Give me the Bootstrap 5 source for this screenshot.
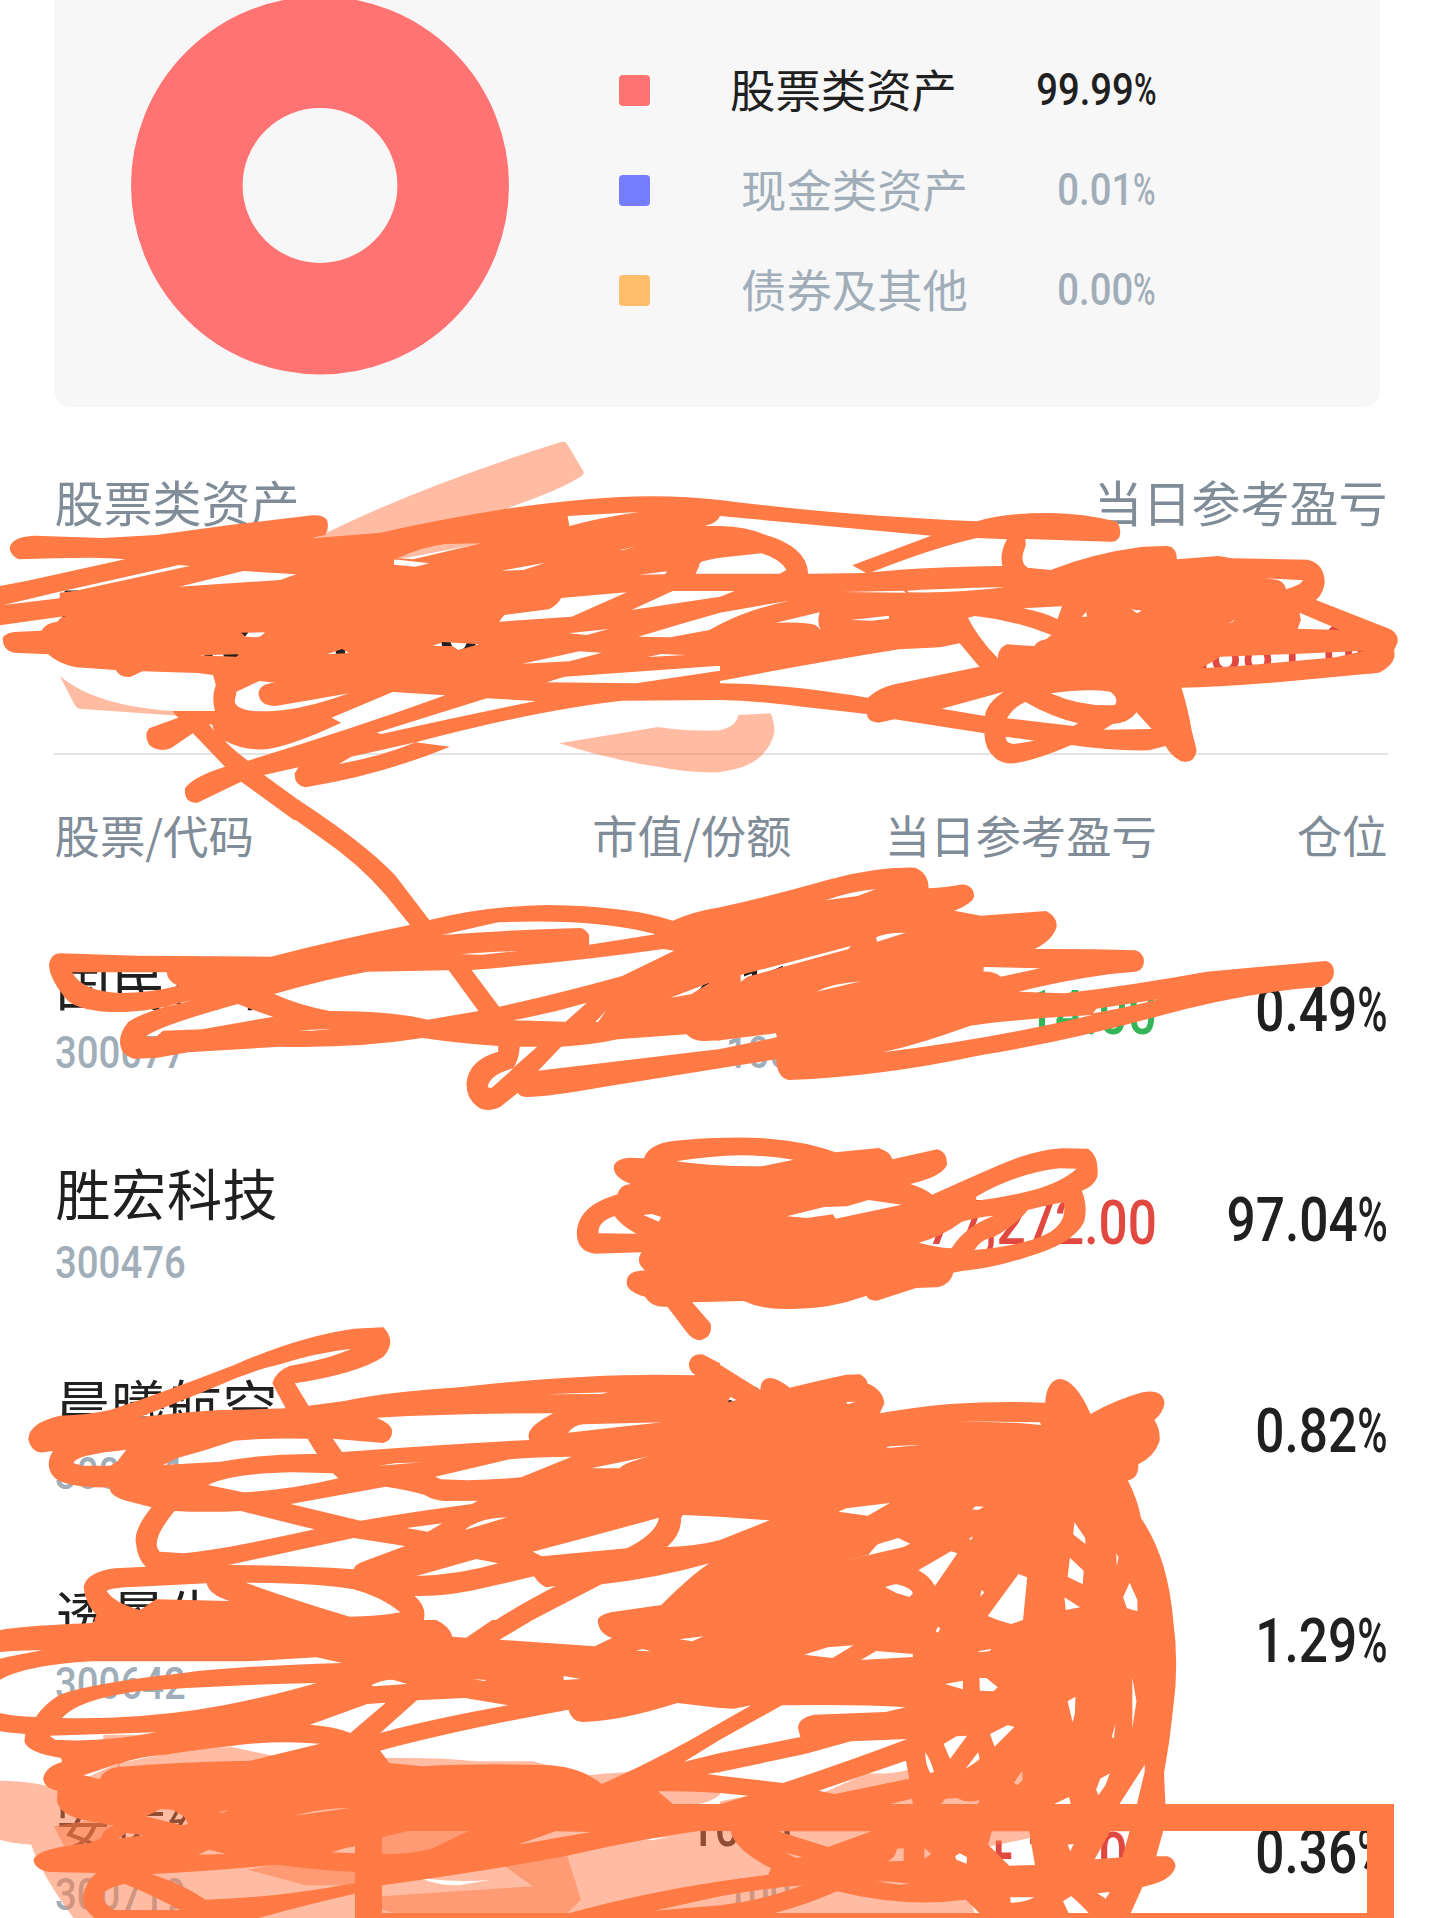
<!DOCTYPE html>
<html lang="zh-CN">
<head>
<meta charset="utf-8">
<meta name="viewport" content="width=device-width, initial-scale=1">
<title>持仓明细</title>
<link href="https://cdn.jsdelivr.net/npm/bootstrap@5.3.0/dist/css/bootstrap.min.css" rel="stylesheet">
<style>
body{font-family:"Noto Sans CJK SC",sans-serif;color:#202020;background:#fff;overflow:hidden}
.screen{width:1440px;height:1918px;overflow:hidden}
.alloc-card{margin-left:54px;width:1326px;height:407px;background:#f7f7f7;border-radius:0 0 16px 16px;overflow:hidden}
.donut{margin-left:76.500px;margin-top:-4px;flex:none}
.legend-list{margin-left:110.500px;width:537px;padding-top:40px}
.legend-line{height:100px;font-size:45.4px;line-height:100px;color:#a1aeb9}
.legend-line.active{color:#202020}
.swatch{width:31px;height:31px;border-radius:4px;flex:none}
.legend-name{margin-left:91px;position:relative;top:-2px}
.active .legend-name{margin-left:80px}
.num{font-family:Roboto,sans-serif;font-weight:500;display:inline-block;transform:scaleX(.85);transform-origin:right;white-space:nowrap}
.num.start{transform-origin:left}
.pct{display:inline-block;transform:scaleX(.8);transform-origin:left;margin-right:-.15em}
.num-md{font-size:45px}
.num-lg{font-size:60.5px;line-height:66px}
.num-mkt{font-size:53px;line-height:66px}
.code{font-size:43.6px;line-height:50px;color:#a1aeb9;transform:scaleX(.88)}
.label-gray{color:#808c98}
.inner{padding-left:54.500px;padding-right:52.500px}
.summary{height:347px;padding-top:66px}
.summary-label{font-size:49px;line-height:56px}
.total{font-size:94px;line-height:98px;letter-spacing:3px}
.total-pl{font-size:67px;line-height:80px;padding-top:33px}
.rule{height:2px;background:#e4e4e4;margin:-1px 52px 0 54px}
.thead-line{margin-top:54px;height:143.5px;font-size:45.4px;line-height:50px}
.stock{height:210.5px}
.c-name{width:447px;flex:none}
.c-mkt{width:290px;flex:none;text-align:right}
.c-pl{width:365.5px;flex:none;text-align:right}
.c-pos{width:230.5px;flex:none;text-align:right}
.stock-name{font-size:55px;line-height:66px;height:66px;position:relative;top:-5px;left:1px;letter-spacing:.7px;white-space:nowrap}
.second{height:50px;margin-top:10px}
.stock .c-pos{padding-top:25px}
.stock .c-pl{padding-top:28px}
.up{color:#e1483f}.down{color:#34b558}
.scribble{position:absolute;left:0;top:0;pointer-events:none}
</style>
</head>
<body>
<main class="screen position-relative">
  <section class="alloc-card d-flex">
    <svg class="donut" width="378" height="379" viewBox="0 0 378 379"><circle cx="189" cy="189.5" r="133.2" fill="none" stroke="#ff7473" stroke-width="111.6"/></svg>
    <div class="legend-list">
      <div class="legend-line active d-flex align-items-center"><span class="swatch" style="background:#ff7473"></span><span class="legend-name">股票类资产</span><span class="num num-md ms-auto">99.99<span class="pct">%</span></span></div>
      <div class="legend-line d-flex align-items-center"><span class="swatch" style="background:#747dff"></span><span class="legend-name">现金类资产</span><span class="num num-md ms-auto">0.01<span class="pct">%</span></span></div>
      <div class="legend-line d-flex align-items-center"><span class="swatch" style="background:#ffbe69"></span><span class="legend-name">债券及其他</span><span class="num num-md ms-auto">0.00<span class="pct">%</span></span></div>
    </div>
  </section>

  <section class="summary inner">
    <div class="summary-label label-gray d-flex justify-content-between"><span>股票类资产</span><span>当日参考盈亏</span></div>
    <div class="d-flex justify-content-between align-items-start pt-5">
      <span class="num start total">568,271.00</span>
      <span class="num total-pl up">76,881.00</span>
    </div>
  </section>
  <div class="rule"></div>

  <section class="inner">
    <div class="thead-line label-gray d-flex">
      <div class="c-name">股票/代码</div><div class="c-mkt">市值/份额</div><div class="c-pl">当日参考盈亏</div><div class="c-pos">仓位</div>
    </div>
    <div class="stock d-flex">
      <div class="c-name"><div class="stock-name">国民技术</div><div class="second"><span class="num start code">300077</span></div></div>
      <div class="c-mkt"><span class="num num-mkt">2111</span><div class="second"><span class="num code">100</span></div></div>
      <div class="c-pl"><span class="num num-lg down">-14.00</span></div>
      <div class="c-pos"><span class="num num-lg">0.49<span class="pct">%</span></span></div>
    </div>
    <div class="stock d-flex">
      <div class="c-name"><div class="stock-name">胜宏科技</div><div class="second"><span class="num start code">300476</span></div></div>
      <div class="c-mkt"></div>
      <div class="c-pl"><span class="num num-lg up">77,272.00</span></div>
      <div class="c-pos"><span class="num num-lg">97.04<span class="pct">%</span></span></div>
    </div>
    <div class="stock d-flex">
      <div class="c-name"><div class="stock-name">晨曦航空</div><div class="second"><span class="num start code">300581</span></div></div>
      <div class="c-mkt"><span class="num num-mkt">3595</span></div>
      <div class="c-pl"></div>
      <div class="c-pos"><span class="num num-lg">0.82<span class="pct">%</span></span></div>
    </div>
    <div class="stock d-flex">
      <div class="c-name"><div class="stock-name">透景生命</div><div class="second"><span class="num start code">300642</span></div></div>
      <div class="c-mkt"></div>
      <div class="c-pl"></div>
      <div class="c-pos"><span class="num num-lg">1.29<span class="pct">%</span></span></div>
    </div>
    <div class="stock d-flex">
      <div class="c-name"><div class="stock-name">安达维尔</div><div class="second"><span class="num start code">300719</span></div></div>
      <div class="c-mkt"><span class="num num-mkt">1045</span><div class="second"><span class="num code">100</span></div></div>
      <div class="c-pl"><span class="num num-lg up">+ 10.00</span></div>
      <div class="c-pos"><span class="num num-lg">0.36<span class="pct">%</span></span></div>
    </div>
  </section>

  <!-- marker strokes laid over the list; each group is one patch of the drawing -->
  <svg class="scribble" width="1440" height="1918" viewBox="0 0 1440 1918" fill="#ff7a45" fill-rule="evenodd">
    <g fill-opacity=".5">
      <g transform="translate(0 420) scale(.459184 .333333)">
        <path d="M680 360Q900 205 1220 67Q1230 63 1234 70L1271 155Q1272 165 1262 172Q1220 210 1110 262L1050 300V370L860 420Z"/>
        <path d="M130 768Q210 860 380 873L388 887L180 867Q168 868 163 855Z"/>
        <path d="M1218 970L1430 922Q1440 920 1460 926Q1510 934 1568 931V1057Q1500 1060 1440 1042Q1330 1020 1218 970Z"/>
      </g>
      <path transform="translate(720 420) scale(.459184 .333333)" d="M0 930Q35 920 40 885L110 880Q120 910 118 940Q100 1040 0 1056Z"/>
      <g transform="translate(0 1598) scale(.459184 .333333)">
        <path d="M225 410H345V428H225ZM0 548Q80 550 130 575L250 500Q400 450 505 447L600 475L850 480Q960 478 1040 490L1160 490L1280 532Q1360 520 1450 519L1568 560V590Q1545 615 1520 618L1568 690V960H160Q90 830 68 740Q20 735 0 725ZM915 840Q1000 855 1070 845L1000 862Q950 862 915 840ZM1400 722L1455 717L1420 727Z"/>
        <path d="M117 685L250 655V720L140 745ZM832 698H1022L940 768H832ZM832 895L1160 865L1100 805L1235 772L1265 905L1235 946H860L832 935ZM540 815L605 798L773 822V862H665Z"/>
      </g>
      <path transform="translate(720 1598) scale(.459184 .333333)" d="M0 610L62 593L215 590L320 526Q370 530 410 515L430 600L480 590L570 475L660 510L675 720L600 742L500 770L560 960H0Z"/>
    </g>

    <path transform="translate(0 420) scale(.459184 .333333)" d="M0 498L60 482L272 418Q230 410 120 415L40 418Q22 405 21 385Q24 350 75 347L225 354L340 345L500 315L680 286Q705 284 712 300Q718 325 708 345L680 355L830 338Q950 300 1110 265Q1300 228 1420 229Q1500 230 1568 240V840L1355 842Q1170 870 905 967L980 980Q830 1065 665 1102Q640 1095 642 1060L650 1042L575 1065L710 1200H640L525 1085L430 1148Q400 1150 403 1105Q420 1070 490 1040L420 940L372 985Q345 998 325 975Q312 945 325 925L388 893L375 873L468 873Q460 830 470 795L464 765L430 759L310 754L285 770Q262 775 252 750L165 742Q125 730 105 703L30 698Q5 690 6 655Q12 635 40 635L90 632Q100 608 125 605Q130 590 148 587L0 616Z
      M1568 288Q1562 310 1535 318H1568ZM1568 413Q1540 420 1530 424Q1522 430 1522 440L1515 461H1568ZM1465 513L1375 570L1568 530V513ZM1568 578Q1480 612 1390 650L1460 652L1545 630L1568 613ZM1568 737L1230 770L1190 787L1385 790L1568 752Z
      M8 555L125 517L390 435L413 438L165 512L130 518V535ZM390 500L530 453L645 463L610 480ZM858 418L935 430L905 440L858 434ZM865 415Q920 380 970 372L1048 370L900 418ZM1236 288L1390 276Q1300 295 1240 318ZM1092 452L1188 428L1140 450ZM1392 464L1453 454L1448 463ZM1350 390L1380 381L1355 391Z
      M1087 605L1098 585L1195 568Q1215 555 1222 534L1365 517L1245 590ZM1238 640L1325 627L1278 645ZM525 638L577 637Q570 652 555 652L535 650ZM430 706L520 703L515 710ZM712 703L745 687L760 699ZM942 678L965 666L1043 673L998 690L985 678ZM1138 731L1262 694L1310 698L1240 724ZM1410 711L1440 702L1493 705Z
      M515 815L565 783L600 788Q565 790 563 820Q565 858 600 858Q680 840 760 820Q680 860 620 870Q520 885 511 845ZM722 893L855 816L970 826Q760 930 540 1022Q500 980 490 962Q530 992 580 988Q640 975 743 908ZM820 938L1060 835L1167 843Q1000 890 830 942ZM738 1032L765 1010L905 967Q830 1010 738 1032ZM455 912L462 914L466 932Z"/>

    <path transform="translate(720 420) scale(.459184 .333333)" d="M0 240Q250 285 560 304Q620 278 720 279Q790 280 865 305Q875 325 870 350Q865 366 850 365L665 357L666 375L660 400Q655 430 670 443L720 450Q810 400 920 380L975 378Q995 382 995 418L1085 408L1115 415L1280 419Q1315 430 1317 485Q1315 520 1298 540L1460 628Q1480 645 1475 670L1468 690Q1475 730 1435 758L1215 787Q1080 802 1005 803Q1020 870 1027 930L1038 990Q1035 1025 1013 1026Q990 1022 970 978L935 991Q850 993 765 975Q690 1020 640 1030Q615 1033 600 1015Q575 985 576 940L380 898L345 908Q320 905 320 882L180 860Q80 842 0 840V790Q130 790 322 833Q345 805 380 793L565 740L522 670L480 682L390 688Q200 730 0 783Z
      M0 288Q250 320 460 347L288 436L318 459L192 461Q190 380 95 343Q60 320 0 318ZM330 457Q460 385 560 354L625 358Q608 400 615 438Q450 440 330 457ZM0 413L90 400Q130 415 145 450L130 461L0 461ZM0 513H32L0 530ZM0 578L150 542Q60 570 0 613ZM265 516L400 512L405 518ZM408 512Q540 503 620 502Q520 520 410 517ZM122 608L217 577Q210 610 220 630L208 615Q190 605 122 608ZM285 600L368 587V596L330 602Z
      M540 593L555 588Q640 600 722 645L710 658Q690 663 685 678L625 673Q605 685 605 715Q560 650 540 593ZM660 565L745 559L735 597Q700 575 660 565ZM788 590L798 575L799 590ZM895 566L905 571L916 570L915 576L907 579ZM1187 475L1270 481Q1265 495 1233 508Q1228 480 1205 478ZM1108 611L1120 599L1117 605ZM1258 626L1265 600L1262 578L1330 618L1350 630ZM1048 745L1090 710L1250 702L1405 692L1340 712L1130 738Z
      M483 866L618 815Q580 850 577 888ZM720 820Q800 805 850 815Q870 835 860 855Q790 862 720 820ZM665 846Q720 890 780 910L770 918L625 895Q640 860 665 846ZM622 950L685 962L640 972Q622 970 622 950ZM907 877L940 927L835 929L855 912Q890 910 907 877Z"/>

    <path transform="translate(0 800) scale(.459184 .333333)" d="M582 0H650Q790 125 860 225L935 360Q1060 318 1190 315Q1370 318 1465 362Q1510 335 1568 322V805L1310 862Q1200 890 1145 891Q1130 888 1128 878L1090 920Q1060 940 1040 920Q1015 895 1016 850Q1020 780 1085 755V738Q1000 730 920 714Q780 745 610 740L410 757L340 774L290 776Q265 765 262 735Q258 700 280 665Q320 630 420 600Q320 640 240 636Q160 630 140 590Q105 530 107 490Q112 462 130 460L300 467L590 470Q730 420 893 375L840 285Q780 190 700 115Z
      M157 517H363Q365 545 388 558Q320 580 260 579Q180 575 157 517ZM318 710Q340 680 518 612Q560 635 595 650L440 688L355 692L340 710ZM597 582Q700 540 800 515L977 511L1042 633L932 659Q850 632 718 633Q650 615 597 582ZM962 405L1085 367Q1300 355 1428 403L1283 434V405Q1275 385 1262 384Q1100 390 962 405ZM1003 463Q1060 455 1128 453L1050 464ZM1027 510Q1250 485 1445 447L1468 452L1355 528Q1220 580 1087 620ZM1117 661Q1200 640 1278 608L1232 665ZM1297 665L1320 632L1302 667ZM1460 593L1548 547L1505 583ZM1132 740H1170L1118 803Q1130 780 1132 740ZM1062 862Q1065 825 1118 805Q1090 840 1070 864ZM1172 812L1222 740Q1290 735 1345 718L1495 703Q1510 725 1535 723L1568 721V747Q1400 775 1172 812ZM650 691L722 687L680 692Z"/>

    <path transform="translate(720 800) scale(.459184 .333333)" d="M0 322Q120 285 240 238Q340 200 425 203Q455 220 454 265Q490 264 530 253Q555 260 553 290Q550 310 510 332L568 347L710 333Q735 350 733 380Q725 420 685 447Q800 446 905 451Q925 460 923 490Q920 515 900 516Q800 525 650 575L750 580Q900 555 1060 515L1320 483Q1338 490 1337 520Q1335 550 1310 560Q1150 575 950 650Q750 725 570 765Q350 830 150 840Q125 835 122 778L0 805Z
      M0 721L122 700L124 712L0 747ZM230 301Q280 275 340 267L300 288ZM340 412Q360 397 405 398L342 425ZM45 525L285 438L280 447L60 530L45 545ZM210 575Q245 550 307 544ZM574 501L697 505L612 530Q595 513 574 515ZM355 757Q440 730 545 677Q640 658 810 645Q600 715 355 757ZM812 640L820 626L955 598Q880 625 812 640Z"/>

    <path transform="translate(540 1110) scale(.573980 .333333)" d="M181 145Q190 95 250 90Q340 78 400 86Q465 95 515 127L590 114Q610 125 614 148L692 118Q710 125 709 165Q700 200 645 222Q670 235 683 254Q740 210 800 165Q860 120 910 115L955 116Q975 140 971 200Q965 230 944 242Q955 290 948 335Q930 400 850 440Q790 475 735 483L720 488Q715 525 690 532L655 534L587 572Q570 570 569 557Q500 600 430 597Q385 598 355 573L265 577L297 640Q302 680 280 691Q265 690 255 665L222 590Q195 595 183 560Q150 545 151 515Q152 485 175 482L183 481Q165 455 177 427L95 431Q65 425 64 370Q65 300 115 265L135 253Q138 225 158 222Q125 200 129 165Q135 145 155 143Z
      M237 154Q300 137 350 136Q400 137 442 149L385 169Q300 170 237 154ZM102 370Q100 335 130 318Q140 345 168 371ZM180 315L195 312L211 321L207 335ZM430 319L495 291L535 289L572 270L630 284L515 326L510 313L465 324ZM760 272V260Q830 190 905 175L935 176Q910 215 860 240Q810 262 760 272ZM660 398Q700 380 735 335Q765 320 790 318Q740 350 717 415Q690 412 660 398ZM757 420Q770 385 790 382Q830 345 850 300Q880 285 912 277Q920 330 890 365Q850 405 757 420Z"/>

    <path transform="translate(0 1300) scale(.459184 .333333)" d="M1568 190L1530 163Q1505 160 1500 190Q1500 215 1515 226Q1300 215 1000 262Q850 275 750 303L672 317L642 250Q780 220 835 170Q865 125 835 82L770 86Q650 110 510 195Q360 275 240 330Q190 345 130 347Q60 370 62 420Q70 460 95 457L115 453Q95 500 120 535Q150 565 238 562Q240 590 275 602L330 622Q290 690 296 730Q300 780 318 800L250 805Q190 815 182 860Q185 910 210 945L205 960H1568Z
      M610 193Q680 160 765 146Q720 175 630 198Q600 215 593 250L622 325Q560 328 480 330Q380 338 303 352Q400 300 470 260Q540 215 610 193ZM820 353Q1000 340 1205 340Q1140 385 1153 420Q1000 430 745 456L725 416L835 429Q855 420 854 390Q850 370 820 353ZM160 490Q160 465 275 449L255 485L240 497H180ZM385 475Q450 450 510 422Q580 413 670 416L690 462Q580 460 480 485L355 495ZM453 555Q500 520 640 517L725 520L737 535Q630 570 530 577ZM825 497L860 490L918 487ZM948 530L1110 478Q1170 470 1245 470L1135 532Q1040 545 960 538ZM1287 505L1417 468Q1355 490 1350 505ZM1237 398Q1250 375 1270 373L1443 367Q1340 382 1237 398ZM1188 283L1325 277L1310 282ZM633 612L840 560Q890 570 925 585Q945 602 970 603L1040 602L1028 612Q900 635 785 662ZM380 633Q450 638 525 633Q600 660 685 688Q500 745 400 760L348 755Q325 725 380 633ZM498 795L770 714L882 738L790 785Q770 795 771 808Q650 795 498 795ZM885 684L963 670L932 695ZM1012 690Q1040 655 1105 652ZM907 828L1037 777L1085 790Q1000 825 907 828ZM1160 755Q1300 705 1435 653Q1430 700 1365 745L1180 769ZM1487 645L1568 650V720Q1520 738 1453 741Q1485 700 1483 655ZM535 848Q700 850 770 868Q830 890 872 937Q820 950 762 950Q640 900 535 848ZM903 888Q980 890 1060 862L1163 829Q1175 855 1190 862L1210 858Q1130 915 1080 960H923Q930 920 903 888ZM1160 960L1310 853Q1430 835 1545 790Q1510 820 1440 915L1330 937Q1305 945 1302 960ZM232 873Q240 862 300 860L450 850Q455 885 500 903L340 898L305 930Q250 910 232 873Z"/>

    <path transform="translate(720 1300) scale(.459184 .333333)" d="M0 194L88 270Q88 235 110 234Q125 235 152 263Q220 240 275 224L305 223Q320 235 321 250Q355 270 358 310L348 340Q420 322 500 312Q600 303 708 308Q712 240 740 237Q775 240 807 342Q860 300 920 277Q965 265 968 310Q965 340 946 360Q960 390 957 425Q945 470 911 493Q912 535 888 541Q910 600 917 655Q975 770 987 960H0Z
      M18 307L22 290L36 300ZM0 650L108 661L0 720ZM258 635L275 625L370 609L322 647ZM360 445L370 439L440 434ZM515 364L697 367L699 375L640 368ZM275 306L297 305L278 313ZM549 628L557 619L575 620L562 630ZM262 785L323 765Q340 735 345 732L388 714L414 731L400 741L355 755ZM432 811L503 754L517 760L468 858Q458 830 432 811ZM542 717L551 709L547 720ZM360 862Q380 850 390 854Q418 865 420 880L413 891L385 880ZM567 890L569 870L576 877ZM583 948L650 822L669 832L660 960H605ZM769 703L772 667L795 713L796 732ZM757 830L762 773L792 812L790 853ZM863 760L868 773L864 798ZM750 892L784 922L753 930ZM878 892L892 848L909 900V934L886 925Z"/>

    <path transform="translate(0 1598) scale(.459184 .333333)" d="M0 97Q30 85 200 75L208 66H1568V960H205Q180 930 180 900Q185 850 210 825L110 822Q75 815 73 785Q80 750 195 735L220 720Q225 690 250 683L180 665Q130 650 124 610L125 578Q95 570 94 540Q100 505 135 492L133 480Q60 465 53 430L55 408Q20 405 0 400Z
      M0 245Q60 200 200 190H540L690 178L745 195Q500 205 400 225Q200 255 130 290Q95 320 78 357Q30 355 0 345ZM0 162Q60 155 92 157Q40 170 0 182ZM135 360Q170 305 300 280Q500 260 690 255Q550 310 430 335Q280 365 135 360ZM108 413L340 403Q220 435 120 425ZM675 380L800 318L840 314L763 405Q730 385 675 380ZM808 262Q830 245 855 245L887 258L815 265ZM828 405L908 307L1012 300L1107 322Q950 360 828 405ZM1030 244L1060 246L1055 249ZM1227 234L1265 243L1228 246ZM1385 158L1400 153L1418 160ZM1480 124L1532 115L1508 130ZM950 66Q980 85 985 116L1015 119L1072 66ZM1160 66L1088 125L1295 145L1333 120Q1302 105 1302 66Z
      M828 458Q1000 395 1238 335Q1245 370 1268 372Q1350 370 1475 315L1568 330V375Q1440 480 1310 558Q1270 510 1200 502Q1050 495 920 505L848 495ZM255 500Q300 475 360 470Q460 450 500 445Q600 425 697 437L545 488Q400 490 260 507ZM182 532L255 498L262 505Q225 515 217 543ZM1490 491L1568 425V465ZM1540 528L1568 522V533ZM1433 580Q1500 578 1568 585V618H1465ZM318 655L350 633L375 635L400 655L410 678L395 682ZM257 722L275 705L312 712ZM432 770L455 755L492 768ZM475 643L497 637L485 644ZM640 653Q700 630 763 630ZM722 763Q750 750 773 745V766ZM832 718L890 698H1022L940 752Q900 768 832 768ZM1127 740L1210 700L1287 702ZM832 862Q1100 810 1240 772Q1400 720 1568 690V850Q1400 885 1240 945H832ZM330 828Q450 820 605 800Q680 815 773 822V855Q600 900 448 905Q400 860 330 828ZM225 885Q240 865 272 858Q330 890 392 936H250Q222 920 225 885ZM563 960Q680 915 773 887V960ZM1425 938L1568 895V922Z"/>

    <path transform="translate(720 1598) scale(.459184 .333333)" d="M0 66H987Q1000 200 987 330Q980 430 967 525L970 620L965 700L950 775H975Q992 785 992 805Q985 850 920 867L893 950H0Z
      M0 330L30 332L68 322L0 375ZM0 425L135 322Q300 318 405 328L360 342L205 350Q170 360 170 390L175 417L0 465ZM0 522L185 468L285 430L408 423Q280 490 137 555L0 533ZM215 578L405 488L412 542L250 588ZM0 585L62 593L0 618ZM183 170L235 148L291 142L245 180ZM307 186L340 159L420 168V177ZM605 66L634 78L660 66ZM470 100L474 87L480 90L475 104ZM562 160L590 153L588 159L566 163ZM490 258L529 248V274ZM565 240H580L605 268L595 280L566 278ZM757 310L774 296L773 345L768 373ZM898 240L907 310L898 390ZM853 418L861 378L858 420ZM588 408L627 381L641 387L598 446ZM487 438L515 415L538 413L501 483ZM447 462Q460 490 466 522L458 525Q447 500 447 462ZM535 512L562 463L566 485ZM640 555L658 518L659 545L648 561ZM819 575L828 542L849 526L840 560L824 592ZM870 618L925 500V520L908 618ZM728 618L760 597L764 618ZM370 618L418 602L420 618ZM482 618L490 603L515 600Q540 618 565 606L562 618Z
      M0 690H22Q25 750 111 811L105 830L0 850ZM127 700H330L235 747ZM140 763L180 778L165 779ZM365 790Q385 775 385 752L400 751V789ZM445 750L460 768L445 782ZM512 775L522 766L538 778L537 797L515 785ZM584 740L592 700H673L686 801L630 803ZM757 740L770 738L763 760ZM816 784L850 700H892L876 778ZM340 850L375 851L414 857L390 860ZM0 895Q100 870 180 862Q100 905 0 922ZM112 948Q190 920 255 880Q400 930 535 905L567 948ZM632 898H685Q660 915 633 914ZM747 910L765 894Q790 925 805 948H760ZM822 886L849 882L840 902Z"/>

    <path d="M355.500 1804H1394V1918H355.500ZM382 1831V1913H1367V1831Z"/>
  </svg>
</main>
<script src="https://cdn.jsdelivr.net/npm/bootstrap@5.3.0/dist/js/bootstrap.bundle.min.js"></script>
</body>
</html>
